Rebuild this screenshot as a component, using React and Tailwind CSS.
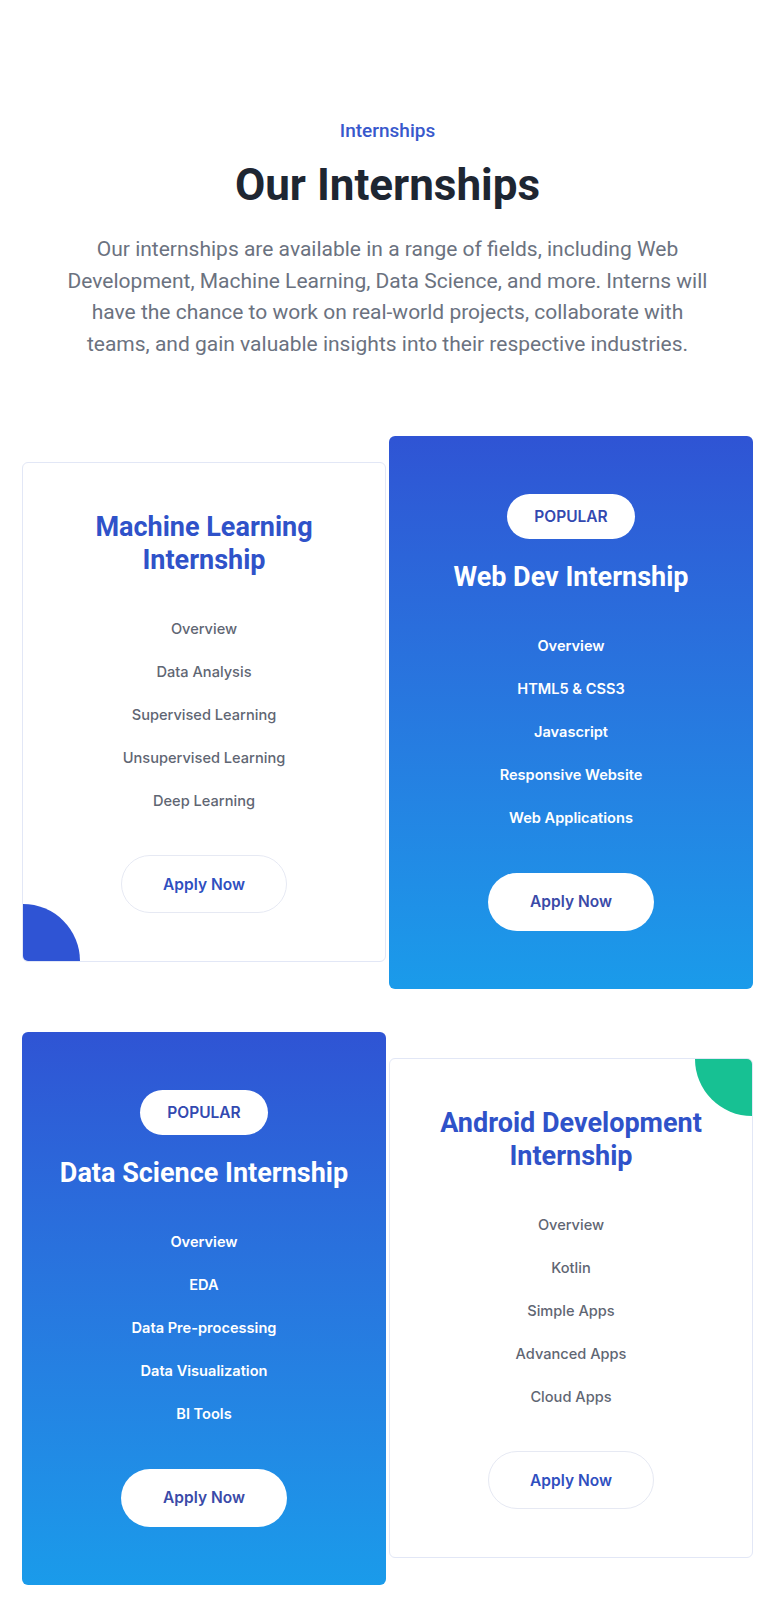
import React from "react";

const cards = [
  {
    title: ["Machine Learning", "Internship"],
    items: ["Overview", "Data Analysis", "Supervised Learning", "Unsupervised Learning", "Deep Learning"],
    popular: false,
    accent: "bl",
  },
  {
    title: ["Web Dev Internship"],
    items: ["Overview", "HTML5 & CSS3", "Javascript", "Responsive Website", "Web Applications"],
    popular: true,
  },
  {
    title: ["Data Science Internship"],
    items: ["Overview", "EDA", "Data Pre-processing", "Data Visualization", "BI Tools"],
    popular: true,
  },
  {
    title: ["Android Development", "Internship"],
    items: ["Overview", "Kotlin", "Simple Apps", "Advanced Apps", "Cloud Apps"],
    popular: false,
    accent: "tr",
  },
];

function Card({ card }) {
  if (card.popular) {
    return (
      <div className="relative flex flex-col items-center rounded-md bg-gradient-to-b from-[#2f54d4] to-[#1a9bea] py-[58px] px-6 text-center">
        <span className="flex h-[45px] w-[128px] items-center justify-center rounded-full bg-white text-[15.5px] font-semibold uppercase text-[#3349b0] [font-family:Inter,sans-serif]">
          Popular
        </span>
        <h3 className="mt-[22px] text-[27px] font-bold leading-[32px] text-white [font-family:Roboto,sans-serif]">
          {card.title.map((t) => (
            <span key={t} className="block">{t}</span>
          ))}
        </h3>
        <ul className="mt-[42px] flex flex-col gap-[21px]">
          {card.items.map((it) => (
            <li key={it} className="text-[14.6px] font-semibold leading-[22px] text-white [font-family:Inter,sans-serif]">
              {it}
            </li>
          ))}
        </ul>
        <button className="mt-[44px] flex h-[58px] w-[166px] items-center justify-center rounded-full bg-white text-[15.5px] font-semibold text-[#3a4aa8] [font-family:Inter,sans-serif]">
          Apply Now
        </button>
      </div>
    );
  }
  return (
    <div className="relative flex flex-col items-center overflow-hidden rounded-md border border-[#e2e7f6] bg-white p-12 text-center">
      {card.accent === "bl" && (
        <div className="absolute -bottom-[57px] -left-[57px] h-[114px] w-[114px] rounded-full bg-[#2f54d4]" />
      )}
      {card.accent === "tr" && (
        <div className="absolute -right-[57px] -top-[57px] h-[114px] w-[114px] rounded-full bg-[#17c193]" />
      )}
      <h3 className="relative text-[27px] font-bold leading-[32.5px] text-[#2f52c9] [font-family:Roboto,sans-serif]">
        {card.title.map((t) => (
          <span key={t} className="block">{t}</span>
        ))}
      </h3>
      <ul className="relative mt-[42px] flex flex-col gap-[21px]">
        {card.items.map((it) => (
          <li key={it} className="text-[14.6px] font-medium leading-[22px] text-[#5f6673] [font-family:Inter,sans-serif]">
            {it}
          </li>
        ))}
      </ul>
      <button className="relative mt-[43px] flex h-[58px] w-[166px] items-center justify-center rounded-full border border-[#e6e9f3] bg-white text-[15.5px] font-semibold text-[#2f4fc0] [font-family:Inter,sans-serif]">
        Apply Now
      </button>
    </div>
  );
}

export default function App() {
  return (
    <div className="min-h-[1600px] bg-white pl-[22px] pr-[31px] pt-[117px] pb-4 [font-family:Roboto,sans-serif]">
      <div className="flex flex-col items-center text-center">
        <p className="text-[19px] font-medium leading-[28px] text-[#3858cc]">Internships</p>
        <h2 className="mt-[14px] text-[44px] font-bold leading-[52px] text-[#1e2632]">Our Internships</h2>
        <p className="mt-[23px] max-w-[650px] text-[21px] leading-[31.7px] text-[#6b7280]">
          Our internships are available in a range of fields, including Web Development, Machine Learning, Data Science, and more. Interns will have the chance to work on real-world projects, collaborate with teams, and gain valuable insights into their respective industries.
        </p>
      </div>
      <div className="mt-[75px] grid grid-cols-2 items-center gap-x-[3px] gap-y-[43px]">
        {cards.map((c, i) => (
          <Card key={i} card={c} />
        ))}
      </div>
    </div>
  );
}
